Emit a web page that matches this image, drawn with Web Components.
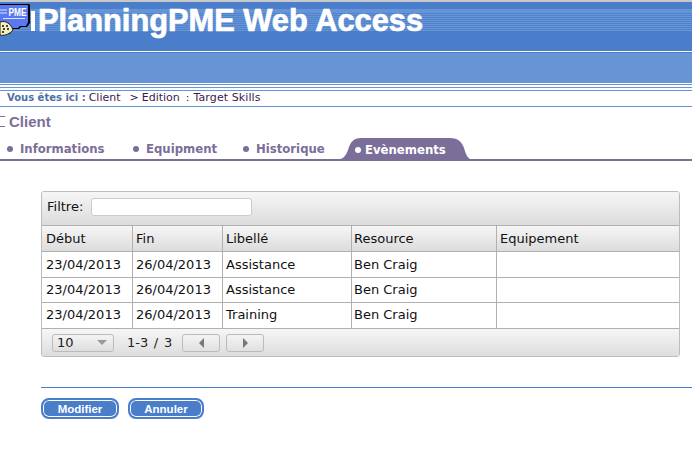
<!DOCTYPE html>
<html>
<head>
<meta charset="utf-8">
<title>PlanningPME Web Access</title>
<style>
  html, body { margin: 0; padding: 0; background: #fff; }
  body { width: 692px; height: 451px; overflow: hidden; font-family: "DejaVu Sans", sans-serif; }
</style>
</head>
<body>
<ppme-header></ppme-header>
<ppme-breadcrumb>
  <span slot="label">Vous êtes ici :</span>
  <span>Client</span><span style="margin-left:9px">&gt;</span><span style="margin-left:3px">Edition</span><span>:</span><span style="margin-left:4px;letter-spacing:.1px">Target Skills</span>
</ppme-breadcrumb>
<ppme-title>Client</ppme-title>
<ppme-tabs></ppme-tabs>
<ppme-grid></ppme-grid>
<ppme-actions>
  <ppme-button style="width:78px">Modifier</ppme-button>
  <ppme-button style="width:76px">Annuler</ppme-button>
</ppme-actions>

<script>
  // Bandeau du haut : titre + logo
  class PpmeHeader extends HTMLElement {
    constructor() {
      super();
      this.attachShadow({ mode: 'open' });
    }
    connectedCallback() {
      this.shadowRoot.innerHTML = `
        <style>
          :host { display: block; position: relative; height: 91px; background: #fff; }
          .edge { height: 3px; background: linear-gradient(#c8c8c8 0 2px, #4a7ecb 2px); }
          .top { height: 48px; background: #4a7ecb; display: flex; flex-direction: column; }
          .stripes {
            margin-top: 6px; height: 22px; padding-left: 38px;
            background:
              linear-gradient(#6694d4 0 3px, transparent 3px),
              repeating-linear-gradient(#4f83cd 0 1px, #6694d4 1px 2px);
            font: bold 30.8px/24px "Liberation Sans", Arial, sans-serif;
            -webkit-text-stroke: 0.7px #fff;
            color: #fff; white-space: nowrap;
          }
          .sep { height: 1px; background: #fff; }
          .mid { height: 31px; background: linear-gradient(#4a7ecb 0 1px, #6694d4 1px); }
          .lines {
            height: 8px;
            background: repeating-linear-gradient(#fff 0 1px, #6694d4 1px 2px, #fff 2px 3px);
          }
          svg { position: absolute; left: 0; top: 3px; }
        </style>
        <div class="edge"></div>
        <div class="top"><div class="stripes">PlanningPME Web Access</div></div>
        <div class="sep"></div>
        <div class="mid"></div>
        <div class="lines"></div>
        <svg width="36" height="33" viewBox="0 0 36 33">
          <rect x="31" y="8" width="4" height="20" fill="#fff"/>
          <path d="M0 1H29L30 2V20L27 24H21L19 26H12L10 31H0Z" fill="#000"/>
          <path d="M0 2H28V19L26 23H20L18 25H11L9 30H0Z" fill="#5b78f0"/>
          <path d="M0 7H7M0 10H7M3 15.5H25" stroke="#d8e4ff" stroke-width="1"/>
          <text x="8.5" y="13" font-family="Liberation Sans, sans-serif" font-size="11" font-weight="bold" fill="#fff" textLength="18" lengthAdjust="spacingAndGlyphs">PME</text>
          <path d="M0 19C6 17 11 21 13 27C9 32 3 33 0 32Z" fill="#f4eeb8" stroke="#222" stroke-width="1"/>
          <path d="M2 23h2M6 23h2M3 26h2M7 26h2M2 29h2" stroke="#444" stroke-width="1.8"/>
        </svg>
      `;
    }
  }

  // Fil d'ariane
  class PpmeBreadcrumb extends HTMLElement {
    constructor() {
      super();
      this.attachShadow({ mode: 'open' });
    }
    connectedCallback() {
      this.shadowRoot.innerHTML = `
        <style>
          :host {
            display: flex; align-items: center; box-sizing: border-box;
            height: 16px; padding: 0 0 2px 7px; border-bottom: 1px solid #6694d4;
            font: 11px "DejaVu Sans", sans-serif; color: #3b1a50; white-space: nowrap;
          }
          ::slotted(span) { margin-left: 6px; }
          ::slotted([slot=label]) { margin-left: 0; margin-right: -3px; font-weight: bold; font-size: 10px; color: #4f6fa8; }
        </style>
        <slot name="label"></slot><slot></slot>
      `;
    }
  }

  class PpmeTitle extends HTMLElement {
    constructor() {
      super();
      this.attachShadow({ mode: 'open' });
    }
    connectedCallback() {
      this.shadowRoot.innerHTML = `
        <style>
          :host {
            display: flex; align-items: center; gap: 4px; height: 31px; box-sizing: border-box;
            padding-bottom: 2px;
            font: bold 15px "Liberation Sans", sans-serif; color: #7b6e99;
          }
          i { display: block; width: 5px; height: 9px; border: 1px solid #7b6e99; border-left: 0; border-right: 0; }
        </style>
        <i></i><slot></slot>
      `;
    }
  }

  // Onglets
  class PpmeTabs extends HTMLElement {
    constructor() {
      super();
      this.attachShadow({ mode: 'open' });
    }
    connectedCallback() {
      const tabs = [['Informations', 126], ['Equipment', 110], ['Historique', 95]];
      this.shadowRoot.innerHTML = `
        <style>
          :host {
            display: flex; height: 23px; box-sizing: border-box; align-items: stretch;
            border-bottom: 2px solid #7b6e99; padding-left: 7px;
            font: bold 11.7px "DejaVu Sans", sans-serif; color: #7b6e99;
          }
          .tab { display: flex; align-items: center; gap: 7px; white-space: nowrap; flex: none; }
          .tab b { display: block; width: 6px; height: 6px; border-radius: 50%; background: #7b6e99; }
          .active { position: relative; width: 134px; height: 23px; padding-left: 17px; gap: 4px; color: #fff; box-sizing: border-box; }
          .active b { background: #fff; position: relative; }
          .active span { position: relative; }
          .active svg { position: absolute; left: 0; top: 0; }
        </style>
        ${tabs.map(t => `<div class="tab" style="width:${t[1]}px"><b></b>${t[0]}</div>`).join('')}
        <div class="tab active">
          <svg width="134" height="23" viewBox="0 0 134 23"><path d="M0 23V21.500C7 21 9 15 11 9C13 3 17 0 23 0H112C120 0 124 4 126 10C128 17 130 21 134 21.500V23Z" fill="#7b6e99"/></svg>
          <b></b><span>Evènements</span>
        </div>
      `;
    }
  }

  // Tableau avec filtre et pagination
  class PpmeGrid extends HTMLElement {
    constructor() {
      super();
      this.attachShadow({ mode: 'open' });
    }
    connectedCallback() {
      const rows = [
        ['23/04/2013', '26/04/2013', 'Assistance', 'Ben Craig', ''],
        ['23/04/2013', '26/04/2013', 'Assistance', 'Ben Craig', ''],
        ['23/04/2013', '26/04/2013', 'Training', 'Ben Craig', ''],
      ];
      const heads = ['Début', 'Fin', 'Libellé', 'Resource', 'Equipement'];
      const heights = [26, 25, 26];
      this.shadowRoot.innerHTML = `
        <style>
          :host {
            display: block; box-sizing: border-box; width: 639px; height: 166px; margin: 30px 0 0 41px;
            border: 1px solid #bdbdbd; border-radius: 3px; overflow: hidden;
            font: 13px "DejaVu Sans", sans-serif; color: #111;
          }
          .bar { background: linear-gradient(#f6f6f6, #dcdcdc); }
          .filter { display: flex; align-items: center; gap: 8px; height: 34px; padding: 0 0 4px 5px; box-sizing: border-box; border-bottom: 1px solid #b0b0b0; }
          .filter input { width: 161px; height: 18px; padding: 0; box-sizing: border-box; border: 1px solid #ccc; border-radius: 3px; background: #fff; }
          .row { display: grid; grid-template-columns: 91px 90px 129px 145px 1fr; box-sizing: border-box; border-bottom: 1px solid #b0b0b0; }
          .row > div { display: flex; align-items: center; padding-left: 3px; border-right: 1px solid #b0b0b0; box-sizing: border-box; }
          .row > div:first-child { padding-left: 4px; }
          .row > div:nth-child(4) { padding-left: 2px; }
          .row > div:last-child { border-right: 0; }
          .row.up > div { padding-bottom: 2px; }
          .head { height: 26px; }
          .pager { display: flex; align-items: center; height: 28px; padding: 0 0 1px 10px; box-sizing: border-box; color: #222; }
          .select { display: flex; align-items: center; justify-content: space-between; width: 62px; height: 18px; box-sizing: border-box; padding: 0 6px 0 4px; border: 1px solid #bbb; border-radius: 3px; background: linear-gradient(#f4f4f4, #dedede); margin-right: 13px; }
          .select i { width: 0; height: 0; border: 5px solid transparent; border-top: 5px solid #999; border-bottom: 0; }
          .count { width: 55px; word-spacing: 1.5px; }
          .btn { display: flex; align-items: center; justify-content: center; width: 38px; height: 18px; box-sizing: border-box; margin-right: 6px; border: 1px solid #bbb; border-radius: 3px; background: linear-gradient(#f4f4f4, #e0e0e0); }
          .l { width: 0; height: 0; border: 5px solid transparent; border-right: 5px solid #777; border-left: 0; }
          .r { width: 0; height: 0; border: 5px solid transparent; border-left: 5px solid #777; border-right: 0; }
        </style>
        <div class="bar filter"><span>Filtre:</span><input type="text"></div>
        <div class="bar row head">${heads.map(h => `<div>${h}</div>`).join('')}</div>
        ${rows.map((r, i) => `<div class="row${i ? ' up' : ''}" style="height:${heights[i]}px">${r.map(c => `<div>${c}</div>`).join('')}</div>`).join('')}
        <div class="bar pager">
          <div class="select">10<i></i></div>
          <div class="count">1-3 / 3</div>
          <div class="btn"><i class="l"></i></div>
          <div class="btn"><i class="r"></i></div>
        </div>
      `;
    }
  }

  // Ligne du bas avec les boutons
  class PpmeActions extends HTMLElement {
    constructor() {
      super();
      this.attachShadow({ mode: 'open' });
    }
    connectedCallback() {
      this.shadowRoot.innerHTML = `
        <style>
          :host {
            display: flex; gap: 9px; margin: 30px 0 0 41px; padding-top: 10px;
            border-top: 1px solid #4a7ecb;
          }
        </style>
        <slot></slot>
      `;
    }
  }

  class PpmeButton extends HTMLElement {
    constructor() {
      super();
      this.attachShadow({ mode: 'open' });
    }
    connectedCallback() {
      this.shadowRoot.innerHTML = `
        <style>
          :host {
            display: flex; align-items: center; justify-content: center; box-sizing: border-box;
            height: 21px; background: #4a7ecb; border: 2px solid #4a7ecb; border-radius: 8px;
            box-shadow: inset 0 0 0 1px #fff;
            font: bold 11.5px "Liberation Sans", sans-serif; color: #fff;
          }
        </style>
        <slot></slot>
      `;
    }
  }

  customElements.define('ppme-header', PpmeHeader);
  customElements.define('ppme-breadcrumb', PpmeBreadcrumb);
  customElements.define('ppme-title', PpmeTitle);
  customElements.define('ppme-tabs', PpmeTabs);
  customElements.define('ppme-grid', PpmeGrid);
  customElements.define('ppme-actions', PpmeActions);
  customElements.define('ppme-button', PpmeButton);
</script>
</body>
</html>
